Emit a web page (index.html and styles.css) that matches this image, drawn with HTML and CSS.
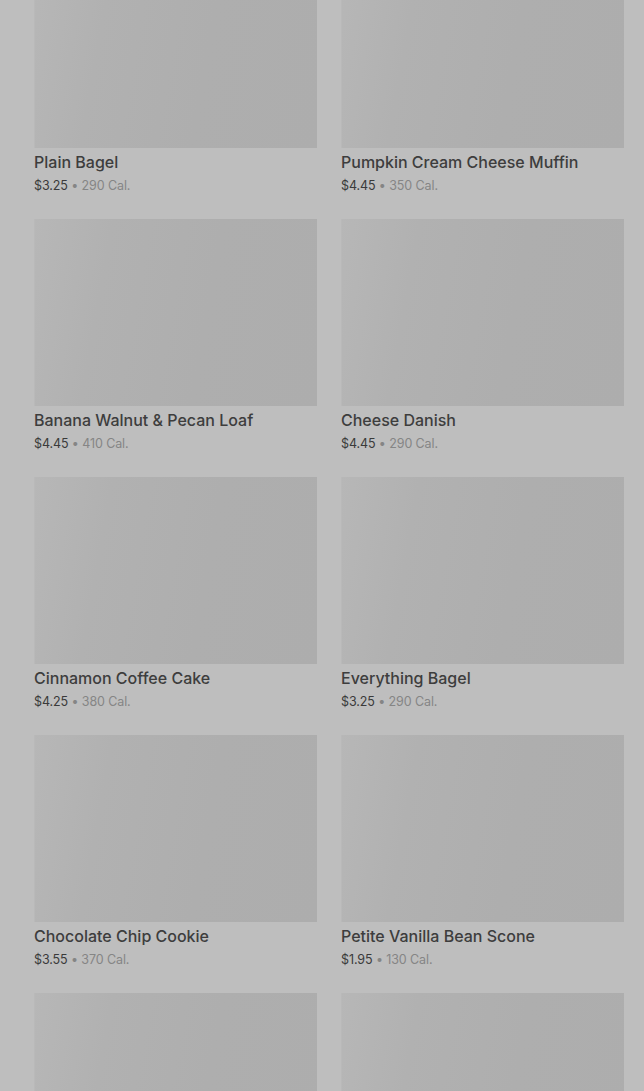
FILE: index.html
```html
<!DOCTYPE html>
<html lang="en">
<head>
    <meta charset="UTF-8">
    <meta name="viewport" content="width=device-width, initial-scale=1.0">
    <title>Bakery</title>
    <link rel="stylesheet" href="styles.css">
</head>
<body>
    <div class="menu-grid">
        <div class="item">
            <div class="thumb"></div>
            <h3 class="name">Plain Bagel</h3>
            <p class="meta"><span class="price">$3.25</span> • 290 Cal.</p>
        </div>
        <div class="item">
            <div class="thumb"></div>
            <h3 class="name">Pumpkin Cream Cheese Muffin</h3>
            <p class="meta"><span class="price">$4.45</span> • 350 Cal.</p>
        </div>
        <div class="item">
            <div class="thumb"></div>
            <h3 class="name">Banana Walnut &amp; Pecan Loaf</h3>
            <p class="meta"><span class="price">$4.45</span> • 410 Cal.</p>
        </div>
        <div class="item">
            <div class="thumb"></div>
            <h3 class="name">Cheese Danish</h3>
            <p class="meta"><span class="price">$4.45</span> • 290 Cal.</p>
        </div>
        <div class="item">
            <div class="thumb"></div>
            <h3 class="name">Cinnamon Coffee Cake</h3>
            <p class="meta"><span class="price">$4.25</span> • 380 Cal.</p>
        </div>
        <div class="item">
            <div class="thumb"></div>
            <h3 class="name">Everything Bagel</h3>
            <p class="meta"><span class="price">$3.25</span> • 290 Cal.</p>
        </div>
        <div class="item">
            <div class="thumb"></div>
            <h3 class="name">Chocolate Chip Cookie</h3>
            <p class="meta"><span class="price">$3.55</span> • 370 Cal.</p>
        </div>
        <div class="item">
            <div class="thumb"></div>
            <h3 class="name">Petite Vanilla Bean Scone</h3>
            <p class="meta"><span class="price">$1.95</span> • 130 Cal.</p>
        </div>
        <div class="item">
            <div class="thumb"></div>
        </div>
        <div class="item">
            <div class="thumb"></div>
        </div>
    </div>
</body>
</html>
```

FILE: styles.css
```css
body {
    margin: 0;
    background-color: #bebebe;
    font-family: Inter, Roboto, sans-serif;
    color: #3a3a3a;
    overflow: hidden;
}

.menu-grid {
    display: grid;
    grid-template-columns: 1fr 1fr;
    column-gap: 24px;
    row-gap: 22px;
    padding: 0 20px 0 34px;
    margin-top: -39px;
}

.thumb {
    height: 187px;
    background: linear-gradient(100deg, #b7b7b7 0%, #b1b1b1 25%, #aeaeae 60%, #adadad 100%);
    box-shadow: inset 1px 0 0 #b9b9b9;
}

.name {
    margin: 2px 0 0;
    font-size: 16px;
    font-weight: 500;
    line-height: 24px;
    color: #3d3d3d;
}

.meta {
    margin: 1px 0 0;
    font-size: 12.5px;
    line-height: 22px;
    color: #858585;
    letter-spacing: -0.1px;
}

.price {
    color: #3a3a3a;
}
```
